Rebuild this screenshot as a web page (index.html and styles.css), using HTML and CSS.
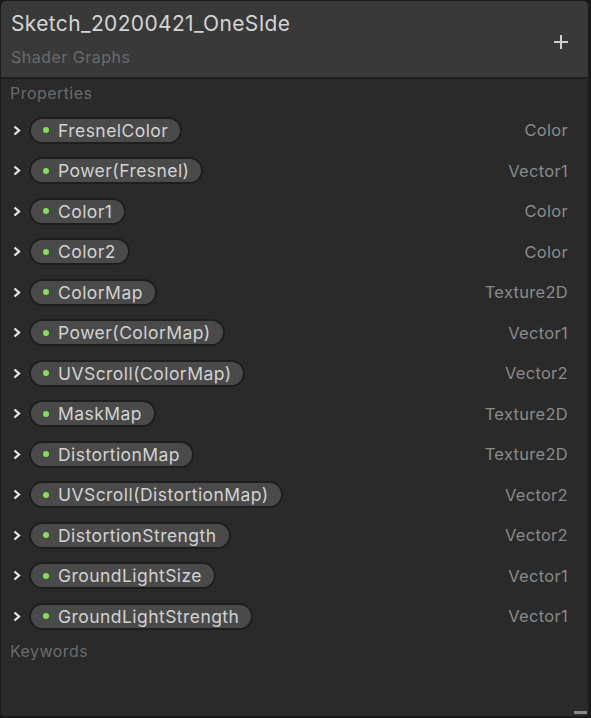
FILE: index.html
```html
<!DOCTYPE html>
<html>
<head>
<meta charset="utf-8">
<link rel="stylesheet" href="styles.css">
</head>
<body>
<div class="panel">
  <div class="header">
    <div class="titles">
      <div class="title">Sketch_20200421_OneSIde</div>
      <div class="subtitle">Shader Graphs</div>
    </div>
    <svg class="plus" width="14" height="14" viewBox="0 0 14 14"><rect x="6" y="0" width="2" height="14" fill="#cfcfcf"/><rect x="0" y="6" width="14" height="2" fill="#cfcfcf"/></svg>
  </div>
  <div class="content">
    <div class="section">Properties</div>
    <div class="rows">
      <div class="row"><svg class="chev" width="8" height="11" viewBox="0 0 8 11"><path d="M1.5 1.5 L6 5.5 L1.5 9.5" fill="none" stroke="#e8e8e8" stroke-width="2.3"/></svg><div class="pill"><span class="dot"></span>FresnelColor</div><span class="type">Color</span></div>
      <div class="row"><svg class="chev" width="8" height="11" viewBox="0 0 8 11"><path d="M1.5 1.5 L6 5.5 L1.5 9.5" fill="none" stroke="#e8e8e8" stroke-width="2.3"/></svg><div class="pill"><span class="dot"></span>Power(Fresnel)</div><span class="type">Vector1</span></div>
      <div class="row"><svg class="chev" width="8" height="11" viewBox="0 0 8 11"><path d="M1.5 1.5 L6 5.5 L1.5 9.5" fill="none" stroke="#e8e8e8" stroke-width="2.3"/></svg><div class="pill"><span class="dot"></span>Color1</div><span class="type">Color</span></div>
      <div class="row"><svg class="chev" width="8" height="11" viewBox="0 0 8 11"><path d="M1.5 1.5 L6 5.5 L1.5 9.5" fill="none" stroke="#e8e8e8" stroke-width="2.3"/></svg><div class="pill"><span class="dot"></span>Color2</div><span class="type">Color</span></div>
      <div class="row"><svg class="chev" width="8" height="11" viewBox="0 0 8 11"><path d="M1.5 1.5 L6 5.5 L1.5 9.5" fill="none" stroke="#e8e8e8" stroke-width="2.3"/></svg><div class="pill"><span class="dot"></span>ColorMap</div><span class="type">Texture2D</span></div>
      <div class="row"><svg class="chev" width="8" height="11" viewBox="0 0 8 11"><path d="M1.5 1.5 L6 5.5 L1.5 9.5" fill="none" stroke="#e8e8e8" stroke-width="2.3"/></svg><div class="pill"><span class="dot"></span>Power(ColorMap)</div><span class="type">Vector1</span></div>
      <div class="row"><svg class="chev" width="8" height="11" viewBox="0 0 8 11"><path d="M1.5 1.5 L6 5.5 L1.5 9.5" fill="none" stroke="#e8e8e8" stroke-width="2.3"/></svg><div class="pill"><span class="dot"></span>UVScroll(ColorMap)</div><span class="type">Vector2</span></div>
      <div class="row"><svg class="chev" width="8" height="11" viewBox="0 0 8 11"><path d="M1.5 1.5 L6 5.5 L1.5 9.5" fill="none" stroke="#e8e8e8" stroke-width="2.3"/></svg><div class="pill"><span class="dot"></span>MaskMap</div><span class="type">Texture2D</span></div>
      <div class="row"><svg class="chev" width="8" height="11" viewBox="0 0 8 11"><path d="M1.5 1.5 L6 5.5 L1.5 9.5" fill="none" stroke="#e8e8e8" stroke-width="2.3"/></svg><div class="pill"><span class="dot"></span>DistortionMap</div><span class="type">Texture2D</span></div>
      <div class="row"><svg class="chev" width="8" height="11" viewBox="0 0 8 11"><path d="M1.5 1.5 L6 5.5 L1.5 9.5" fill="none" stroke="#e8e8e8" stroke-width="2.3"/></svg><div class="pill"><span class="dot"></span>UVScroll(DistortionMap)</div><span class="type">Vector2</span></div>
      <div class="row"><svg class="chev" width="8" height="11" viewBox="0 0 8 11"><path d="M1.5 1.5 L6 5.5 L1.5 9.5" fill="none" stroke="#e8e8e8" stroke-width="2.3"/></svg><div class="pill"><span class="dot"></span>DistortionStrength</div><span class="type">Vector2</span></div>
      <div class="row"><svg class="chev" width="8" height="11" viewBox="0 0 8 11"><path d="M1.5 1.5 L6 5.5 L1.5 9.5" fill="none" stroke="#e8e8e8" stroke-width="2.3"/></svg><div class="pill"><span class="dot"></span>GroundLightSize</div><span class="type">Vector1</span></div>
      <div class="row"><svg class="chev" width="8" height="11" viewBox="0 0 8 11"><path d="M1.5 1.5 L6 5.5 L1.5 9.5" fill="none" stroke="#e8e8e8" stroke-width="2.3"/></svg><div class="pill"><span class="dot"></span>GroundLightStrength</div><span class="type">Vector1</span></div>
    </div>
    <div class="section keywords">Keywords</div>
  </div>
  <div class="grip"></div>
</div>
</body>
</html>
```

FILE: styles.css
```css
html, body {
  margin: 0;
  padding: 0;
  background: #191919;
  width: 591px;
  height: 718px;
  overflow: hidden;
  font-family: Inter, "Noto Sans", sans-serif;
}
.panel {
  position: relative;
  box-sizing: border-box;
  width: 589px;
  height: 717px;
  background: #2a2a2a;
  border: 1px solid #1c1c1c;
  border-radius: 6px 6px 4px 4px;
  overflow: hidden;
  display: flex;
  flex-direction: column;
}
.header {
  box-sizing: border-box;
  height: 78px;
  background: #393939;
  border-bottom: 2px solid #1f1f1f;
  display: flex;
  align-items: center;
  justify-content: space-between;
  padding: 0 20px 0 10px;
}
.titles {
  display: flex;
  flex-direction: column;
  align-self: flex-start;
  padding-top: 9px;
}
.title {
  font-size: 21px;
  letter-spacing: 0.35px;
  color: #d4d4d4;
  line-height: 27px;
}
.subtitle {
  font-size: 16px;
  letter-spacing: 0.5px;
  color: #6a6a6a;
  line-height: 20px;
  margin-top: 10px;
}
.plus {
  margin-top: 6px;
}
.content {
  padding: 0 20px 0 9px;
  display: flex;
  flex-direction: column;
}
.section {
  font-size: 16px;
  letter-spacing: 0.45px;
  color: #6a6a6a;
  height: 28px;
  line-height: 28px;
}
.rows {
  display: flex;
  flex-direction: column;
  margin-top: 3px;
}
.row {
  height: 40.5px;
  display: flex;
  align-items: center;
}
.chev {
  margin-left: 3px;
  width: 8px;
  flex: none;
}
.pill {
  margin-left: 8px;
  box-sizing: border-box;
  height: 27px;
  border-radius: 14px;
  background: #4a4a4a;
  border: 2px solid #1e1e1e;
  display: flex;
  align-items: center;
  padding: 0 12px 0 12px;
  font-size: 17.5px;
  color: #d2d2d2;
  letter-spacing: 0.45px;
}
.dot {
  width: 6px;
  height: 6px;
  border-radius: 50%;
  background: #84e05a;
  margin-right: 9px;
  flex: none;
}
.type {
  margin-left: auto;
  font-size: 16.5px;
  letter-spacing: 0.3px;
  color: #8a8a8a;
}
.keywords {
  margin-top: 0;
}
.grip {
  position: absolute;
  right: 1px;
  bottom: 2px;
  width: 13px;
  height: 3px;
  background: #8a8a8a;
}
```
